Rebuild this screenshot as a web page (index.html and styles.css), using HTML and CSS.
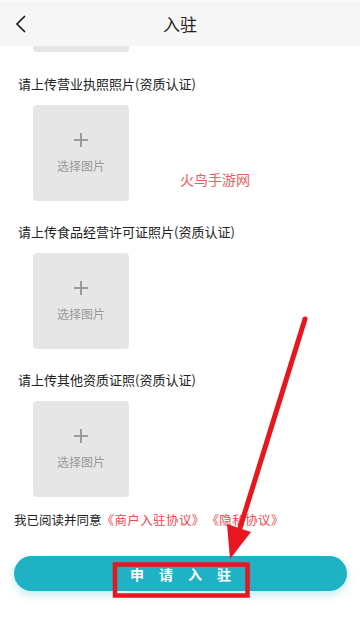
FILE: index.html
```html
<!DOCTYPE html>
<html lang="zh">
<head>
<meta charset="utf-8">
<title>入驻</title>
<link rel="stylesheet" href="styles.css">
</head>
<body>
<div class="page">
  <header class="topbar">
    <span class="back">
      <svg width="12" height="18" viewBox="0 0 12 18"><path d="M10 1 L2 9 L10 17" fill="none" stroke="#111" stroke-width="1.6"/></svg>
    </span>
    <h1 class="title">入驻</h1>
    <span class="spacer"></span>
  </header>

  <main class="content">
    <div class="upload upload-partial"></div>

    <section class="field">
      <p class="label">请上传营业执照照片(资质认证)</p>
      <div class="upload">
        <span class="plus"></span>
        <span class="upload-text">选择图片</span>
      </div>
    </section>

    <section class="field">
      <p class="label">请上传食品经营许可证照片(资质认证)</p>
      <div class="upload">
        <span class="plus"></span>
        <span class="upload-text">选择图片</span>
      </div>
    </section>

    <section class="field">
      <p class="label">请上传其他资质证照(资质认证)</p>
      <div class="upload">
        <span class="plus"></span>
        <span class="upload-text">选择图片</span>
      </div>
    </section>

    <p class="agree">我已阅读并同意<span class="link">《商户入驻协议》</span><span class="link link-gap">《隐私协议》</span></p>

    <div class="actions">
      <button class="submit">申请入驻</button>
    </div>
  </main>

  <div class="watermark">火鸟手游网</div>

  <svg class="annotation" width="360" height="619" viewBox="0 0 360 619">
    <rect x="115" y="564.5" width="132.5" height="31" fill="none" stroke="#e8161e" stroke-width="4.5"/>
    <line x1="305" y1="319" x2="240" y2="528" stroke="#e8161e" stroke-width="5" stroke-linecap="round"/>
    <polygon points="227,524 251,532 230,559" fill="#e8161e"/>
  </svg>
</div>
</body>
</html>
```

FILE: styles.css
```css
* { box-sizing: border-box; }
html, body { margin: 0; padding: 0; background: #fff; }
body {
  font-family: "Noto Sans CJK SC", "Noto Sans", sans-serif;
  color: #222;
}
.page {
  position: relative;
  width: 360px;
  height: 619px;
  overflow: hidden;
  background: #fff;
}
.topbar {
  display: grid;
  grid-template-columns: 46px 1fr 46px;
  align-items: center;
  height: 46px;
  background: #f6f6f6;
  border-top: 1px solid #fbfbfb;
}
.back {
  display: flex;
  align-items: center;
  padding-left: 15px;
  height: 100%;
}
.title {
  margin: 0;
  text-align: center;
  font-size: 17px;
  font-weight: 400;
  color: #222;
}
.content {
  display: flex;
  flex-direction: column;
}
.upload {
  width: 96px;
  height: 96px;
  margin-left: 33px;
  background: #e6e6e6;
  border-radius: 4px;
  display: flex;
  flex-direction: column;
  align-items: center;
}
.upload-partial {
  height: 6px;
  border-radius: 0 0 4px 4px;
}
.field {
  display: flex;
  flex-direction: column;
  margin-top: 21px;
}
.field:first-of-type { margin-top: 22px; }
.label {
  margin: 0 0 11px 0;
  padding-left: 18px;
  font-size: 13px;
  line-height: 20px;
  color: #222;
}
.plus {
  position: relative;
  width: 14px;
  height: 14px;
  margin-top: 28px;
}
.plus::before, .plus::after {
  content: "";
  position: absolute;
  background: #9a9a9a;
}
.plus::before { left: 0; right: 0; top: 6px; height: 1.6px; }
.plus::after { top: 0; bottom: 0; left: 6px; width: 1.6px; }
.upload-text {
  margin-top: 11px;
  font-size: 12px;
  line-height: 16px;
  color: #999;
}
.agree {
  margin: 14px 0 0 0;
  padding-left: 14px;
  font-size: 12.5px;
  line-height: 18px;
  color: #222;
}
.link { color: #f0484c; letter-spacing: 0.4px; }
.link-gap { margin-left: 8px; }
.actions {
  padding: 27px 13px 0 14px;
}
.submit {
  display: block;
  width: 100%;
  height: 35px;
  border: 0;
  border-radius: 18px;
  background: #1eb2c4;
  box-shadow: 0 4px 8px rgba(30, 178, 196, 0.25);
  color: #fff;
  font-family: "Noto Sans CJK SC", sans-serif;
  font-size: 14px;
  font-weight: 700;
  letter-spacing: 15px;
  text-indent: 15px;
  padding: 0;
}
.watermark {
  position: absolute;
  left: 180px;
  top: 169px;
  font-size: 14px;
  line-height: 20px;
  color: #f25a5e;
}
.annotation {
  position: absolute;
  left: 0;
  top: 0;
  pointer-events: none;
}
```
